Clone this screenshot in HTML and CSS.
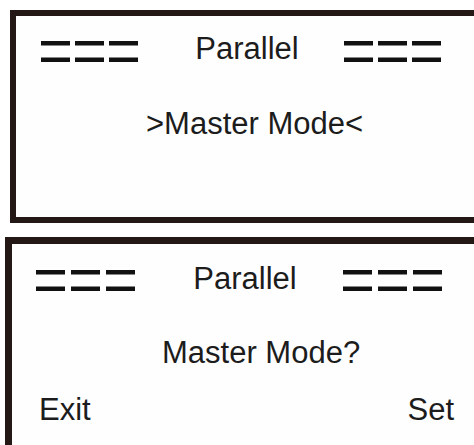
FILE: index.html
```html
<!DOCTYPE html>
<html lang="en">
<head>
<meta charset="utf-8">
<title>Parallel - Master Mode</title>
<link rel="stylesheet" href="styles.css">
</head>
<body>
  <section class="panel panel-select">
    <div class="header">
      <svg class="dashes" width="97" height="22" viewBox="0 0 97 22" aria-hidden="true">
        <rect x="0" y="0" width="29" height="4.5"/><rect x="34" y="0" width="29" height="4.5"/><rect x="68" y="0" width="29" height="4.5"/>
        <rect x="0" y="16.5" width="29" height="4.5"/><rect x="34" y="16.5" width="29" height="4.5"/><rect x="68" y="16.5" width="29" height="4.5"/>
      </svg>
      <span class="title">Parallel</span>
      <svg class="dashes" width="97" height="22" viewBox="0 0 97 22" aria-hidden="true">
        <rect x="0" y="0" width="29" height="4.5"/><rect x="34" y="0" width="29" height="4.5"/><rect x="68" y="0" width="29" height="4.5"/>
        <rect x="0" y="16.5" width="29" height="4.5"/><rect x="34" y="16.5" width="29" height="4.5"/><rect x="68" y="16.5" width="29" height="4.5"/>
      </svg>
    </div>
    <p class="message message-select">&gt;Master Mode&lt;</p>
  </section>

  <section class="panel panel-confirm">
    <div class="header">
      <svg class="dashes" width="99" height="22" viewBox="0 0 99 22" aria-hidden="true">
        <rect x="0" y="0" width="29" height="4.5"/><rect x="35" y="0" width="29" height="4.5"/><rect x="70" y="0" width="29" height="4.5"/>
        <rect x="0" y="16.5" width="29" height="4.5"/><rect x="35" y="16.5" width="29" height="4.5"/><rect x="70" y="16.5" width="29" height="4.5"/>
      </svg>
      <span class="title">Parallel</span>
      <svg class="dashes" width="99" height="22" viewBox="0 0 99 22" aria-hidden="true">
        <rect x="0" y="0" width="29" height="4.5"/><rect x="35" y="0" width="29" height="4.5"/><rect x="70" y="0" width="29" height="4.5"/>
        <rect x="0" y="16.5" width="29" height="4.5"/><rect x="35" y="16.5" width="29" height="4.5"/><rect x="70" y="16.5" width="29" height="4.5"/>
      </svg>
    </div>
    <p class="message message-confirm">Master Mode?</p>
    <div class="footer">
      <span class="action">Exit</span>
      <span class="action">Set</span>
    </div>
  </section>
</body>
</html>
```

FILE: styles.css
```css
html, body {
  margin: 0;
  padding: 0;
  background: #ffffff;
  overflow: hidden;
}

body {
  width: 474px;
  height: 445px;
  font-family: "Liberation Sans", Arial, sans-serif;
  font-size: 31px;
  line-height: 29px;
  color: #1c1c1c;
}

.panel {
  box-sizing: border-box;
  background: #fefefe;
  border-color: #231816;
  border-style: solid;
}

.panel-select {
  margin: 10px 0 0 10px;
  height: 213px;
  border-width: 6px 0 6px 6px;
  padding: 18px 0 0 25px;
}

.panel-confirm {
  margin: 14px 0 0 5px;
  height: 208px;
  border-width: 7px 0 0 7px;
  padding: 20px 0 0 24px;
}

.header {
  display: grid;
  grid-template-columns: 97px 206px 97px;
  align-items: start;
  height: 29px;
}

.panel-confirm .header {
  grid-template-columns: 99px 208px 99px;
}

.dashes {
  display: block;
  margin-top: 7px;
  fill: #111111;
}

.panel-confirm .dashes {
  margin-top: 6px;
}

.title {
  justify-self: center;
  padding-left: 12px;
  white-space: nowrap;
}

.message {
  margin: 0;
  white-space: nowrap;
}

.message-select {
  margin-top: 46px;
  padding-left: 105px;
}

.message-confirm {
  margin-top: 45px;
  padding-left: 126px;
}

.footer {
  display: flex;
  justify-content: space-between;
  margin-top: 28px;
  padding: 0 20px 0 3px;
}

.action {
  white-space: nowrap;
}
```
